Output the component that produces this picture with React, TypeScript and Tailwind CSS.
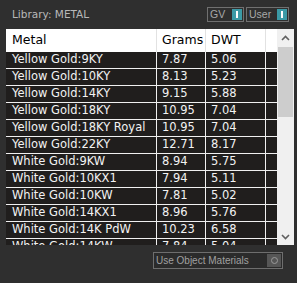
const rows: [string, string, string][] = [
  ["Yellow Gold:9KY", "7.87", "5.06"],
  ["Yellow Gold:10KY", "8.13", "5.23"],
  ["Yellow Gold:14KY", "9.15", "5.88"],
  ["Yellow Gold:18KY", "10.95", "7.04"],
  ["Yellow Gold:18KY Royal", "10.95", "7.04"],
  ["Yellow Gold:22KY", "12.71", "8.17"],
  ["White Gold:9KW", "8.94", "5.75"],
  ["White Gold:10KX1", "7.94", "5.11"],
  ["White Gold:10KW", "7.81", "5.02"],
  ["White Gold:14KX1", "8.96", "5.76"],
  ["White Gold:14K PdW", "10.23", "6.58"],
  ["White Gold:14KW", "7.84", "5.04"],
];

function Toggle({ label, w }: { label: string; w: string }) {
  return (
    <div className={`flex items-center justify-between h-[15px] ${w} border border-[#707070] pl-[2px] pr-[1px]`}>
      <span className="text-[10.5px] leading-none text-[#a8a8a8]" style={{ fontFamily: "'Liberation Sans', Arial, sans-serif" }}>
        {label}
      </span>
      <span className="flex items-center justify-center w-[10px] h-[11px] bg-[#3b9aa6]">
        <span className="w-[2px] h-[7px] bg-white" />
      </span>
    </div>
  );
}

export default function App() {
  return (
    <div
      className="w-[297px] h-[283px] bg-[#2f2f2f] flex flex-col"
      style={{ fontFamily: "'DejaVu Sans', Verdana, sans-serif" }}
    >
      {/* top bar */}
      <div className="h-[29px] flex items-start pl-[12px] pr-[8px]">
        <div className="pt-[9px] text-[10.5px] leading-none text-[#b8b8b8]">Library: METAL</div>
        <div className="ml-auto mt-[7px] flex gap-[2px]">
          <Toggle label="GV" w="w-[37px]" />
          <Toggle label="User" w="w-[43px]" />
        </div>
      </div>

      {/* table */}
      <div className="ml-[6px] w-[288px] h-[216px] flex overflow-hidden">
        <div className="flex-1 flex flex-col text-[11.5px]">
          <div className="h-[23px] flex bg-white text-black text-[12.5px] shrink-0">
            <div className="w-[151px] border-r border-[#e2e2e2] pl-[6px] flex items-center">Metal</div>
            <div className="w-[49px] border-r border-[#e2e2e2] pl-[5px] flex items-center">Grams</div>
            <div className="w-[60px] border-r border-[#e2e2e2] pl-[5px] flex items-center">DWT</div>
            <div className="flex-1" />
          </div>
          {rows.map(([m, g, d]) => (
            <div key={m} className="h-[17px] shrink-0 flex bg-[#201e1d] text-[#f2f2f2] border-b border-[#f0f0f0]">
              <div className="w-[151px] border-r border-[#f0f0f0] pl-[6px] flex items-center">{m}</div>
              <div className="w-[49px] border-r border-[#f0f0f0] pl-[5px] flex items-center">{g}</div>
              <div className="w-[60px] border-r border-[#f0f0f0] pl-[5px] flex items-center">{d}</div>
              <div className="flex-1" />
            </div>
          ))}
        </div>
        {/* scrollbar */}
        <div className="w-[17px] bg-[#f0f0f0] flex flex-col">
          <div className="h-[18px] flex items-center justify-center">
            <svg width="9" height="6" viewBox="0 0 9 6">
              <path d="M1 5 L4.5 1.5 L8 5" stroke="#606060" strokeWidth="1.6" fill="none" />
            </svg>
          </div>
          <div className="mx-[1px] h-[70px] bg-[#cdcdcd]" />
          <div className="flex-1" />
          <div className="h-[17px] flex items-center justify-center">
            <svg width="9" height="6" viewBox="0 0 9 6">
              <path d="M1 1 L4.5 4.5 L8 1" stroke="#606060" strokeWidth="1.6" fill="none" />
            </svg>
          </div>
        </div>
      </div>

      {/* bottom */}
      <div className="mt-[7px] ml-[153px] w-[130px] h-[17px] border border-[#6e6e6e] bg-[#2b2b2b] flex items-center">
        <span
          className="pl-[2px] text-[10px] leading-none text-[#a0a0a0]"
          style={{ fontFamily: "'Liberation Sans', Arial, sans-serif" }}
        >
          Use Object Materials
        </span>
        <span className="ml-auto mr-[1px] w-[14px] h-[13px] bg-[#565656] flex items-center justify-center">
          <span className="w-[7px] h-[7px] rounded-full border border-[#9a9a9a]" />
        </span>
      </div>
    </div>
  );
}
